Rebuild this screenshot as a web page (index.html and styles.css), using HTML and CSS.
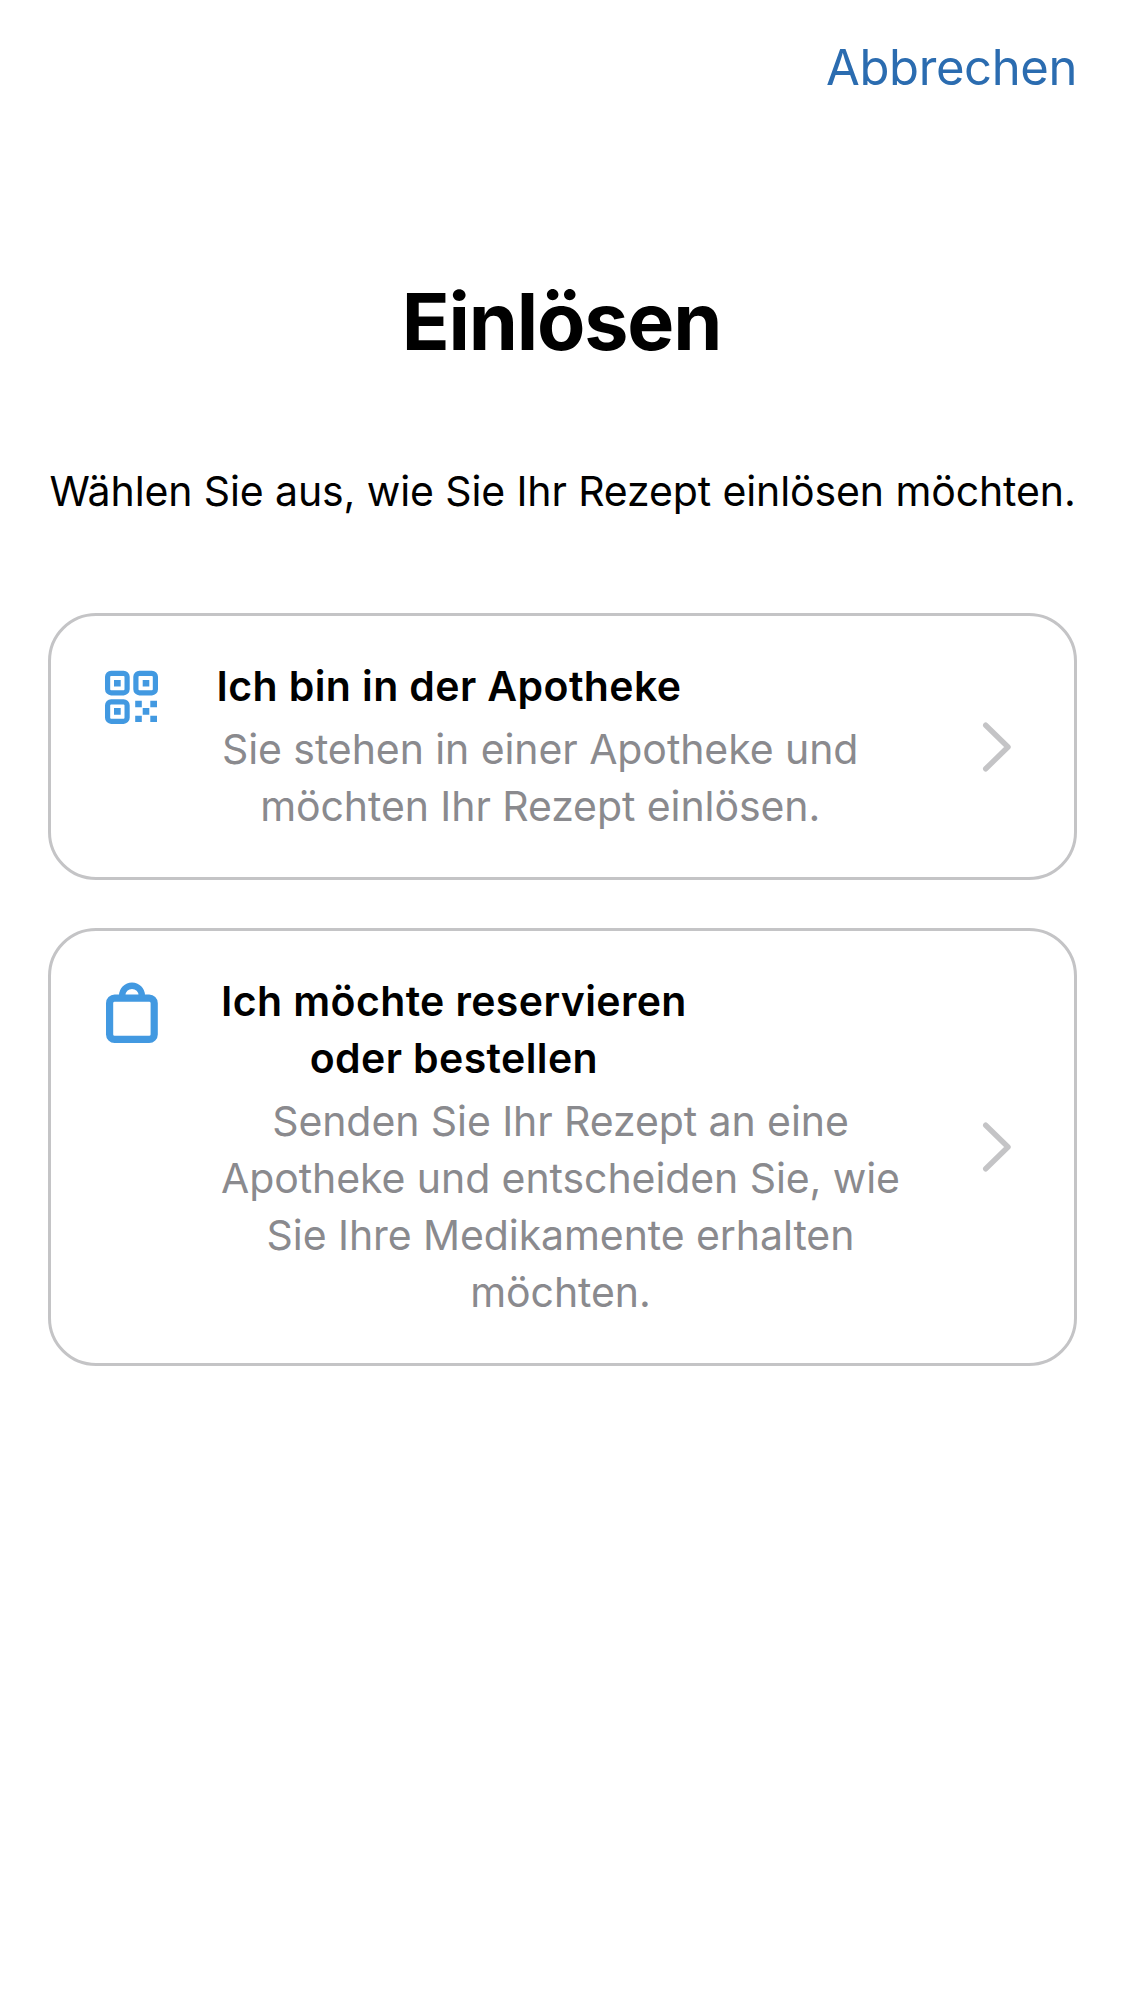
FILE: index.html
```html
<!DOCTYPE html>
<html lang="de">
<head>
<meta charset="utf-8">
<title>Einlösen</title>
<link rel="stylesheet" href="styles.css">
</head>
<body>
<header class="bar"><a class="cancel">Abbrechen</a></header>
<main>
<h1 class="title">Einlösen</h1>
<p class="intro">Wählen Sie aus, wie Sie Ihr Rezept einlösen möchten.</p>
<section class="options">
<article class="card card-pharmacy">
<svg class="icon" viewBox="0 0 56 62" fill="none" stroke="#4299e1" stroke-width="5.2"><rect x="3.6" y="6.300" width="19.500" height="19.500" rx="3.5"/><rect x="31.900" y="6.300" width="19.500" height="19.500" rx="3.5"/><rect x="3.600" y="34.800" width="19.500" height="19.500" rx="3.5"/><path stroke="none" fill="#4299e1" d="M10 13h6.700v6.500h-6.700zM38.700 13h6.600v6.500h-6.600zM10 41h6.700v6.700h-6.700zM31.200 33.700h6.600v6.500h-6.600zM46.300 33.700h6.700v6.500h-6.700zM38.700 41h6.600v6.700h-6.600zM31.200 48.700h6.600v6.300h-6.600zM46.300 48.700h6.700v6.300h-6.700z"/></svg>
<div class="copy">
<h2 class="name">Ich bin in der Apotheke</h2>
<p class="detail"><span>Sie stehen in einer Apotheke und</span><span>möchten Ihr Rezept einlösen.</span></p>
</div>
<svg class="chevron" viewBox="0 0 30 50"><path d="M4.700 3.200L27 25L4.700 46.800"/></svg>
</article>
<article class="card">
<svg class="icon" viewBox="0 0 56 62" fill="none" stroke="#4299e1" stroke-width="7.2"><rect x="5.600" y="16.200" width="44.600" height="41.200" rx="5"/><path stroke-width="6.400" d="M18.200 16v-2.500a9.800 9.800 0 0 1 19.600 0v2.500"/></svg>
<div class="copy">
<h2 class="name"><span>Ich möchte reservieren</span><span>oder bestellen</span></h2>
<p class="detail"><span>Senden Sie Ihr Rezept an eine</span><span>Apotheke und entscheiden Sie, wie</span><span>Sie Ihre Medikamente erhalten</span><span>möchten.</span></p>
</div>
<svg class="chevron" viewBox="0 0 30 50"><path d="M4.700 3.200L27 25L4.700 46.800"/></svg>
</article>
</section>
</main>
</body>
</html>
```
FILE: styles.css
```css
* { box-sizing: border-box; margin: 0; padding: 0; }
body { width: 1125px; min-height: 2001px; background: #fff; color: #000; font-family: Inter, sans-serif; }
.bar { height: 136px; padding: 36px 48px 0; text-align: right; }
.cancel { font-size: 49px; line-height: 64px; letter-spacing: -0.4px; color: #2b6cb0; }
.title { margin-top: 135px; padding-right: 2px; font-size: 79px; line-height: 100px; text-align: center; letter-spacing: -1.2px; }
.intro { margin-top: 92px; font-size: 41px; line-height: 57px; letter-spacing: -0.11px; text-align: center; white-space: nowrap; }
.options { display: flex; flex-direction: column; gap: 48px; margin: 93px 48px 0; }
.card { display: flex; border: 3px solid #c4c4c6; border-radius: 48px; padding: 42px 63px 42px 53px; }
.icon { width: 56px; height: 62px; flex: none; margin-top: 9px; }
.copy { flex: 1; margin-left: 61px; display: flex; flex-direction: column; align-items: flex-start; gap: 6px; white-space: nowrap; }
.card-pharmacy .copy { margin-left: 56.5px; }
.card-pharmacy .detail { padding-left: 5.5px; }
.name, .detail { font-size: 41px; line-height: 57px; text-align: center; }
.name { font-weight: 600; letter-spacing: 0.39px; }
.detail { color: #8a8a8e; letter-spacing: -0.08px; }
.name span, .detail span { display: block; }
.chevron { width: 30px; height: 50px; flex: none; align-self: center; fill: none; stroke: #c4c4c6; stroke-width: 5.4; stroke-linecap: round; stroke-linejoin: round; }
```
